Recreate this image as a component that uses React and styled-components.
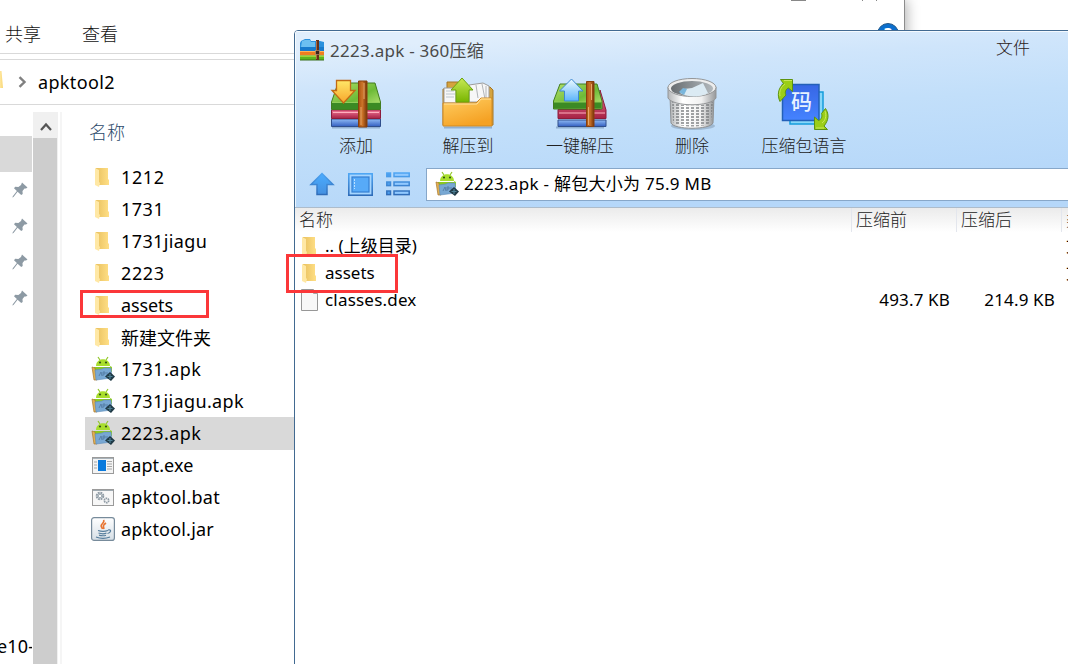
import React from "react";
import styled, { createGlobalStyle } from "styled-components";

const GlobalStyle = createGlobalStyle`
  * { box-sizing: border-box; }
  html, body { margin: 0; padding: 0; overflow: hidden; }
  body { font-family: "Noto Sans", "Noto Sans CJK SC", sans-serif; background: #fff; color: #000; }
  svg { display: block; flex: none; }
`;

const Desktop = styled.div`
  position: relative;
  width: 1068px;
  height: 664px;
  overflow: hidden;
  background: #fff;
`;

/* ---------- text ---------- */
const Text = styled.span`
  font-size: ${(p) => p.$size || 18}px;
  letter-spacing: ${(p) => p.$track || 0}px;
  color: ${(p) => p.$color || "#000"};
  line-height: 24px;
  white-space: nowrap;
  font-weight: ${(p) => p.$weight || 400};
`;
const CjkText = styled(Text)`
  font-family: "Noto Sans CJK SC", sans-serif;
  font-weight: ${(p) => p.$weight || 300};
`;

/* ---------- explorer window ---------- */
const ExplorerWindow = styled.section`
  position: absolute;
  left: 0;
  top: 0;
  width: 905px;
  height: 664px;
  display: flex;
  flex-direction: column;
  background: #fff;
  border-right: 1px solid #8c8c8c;
  box-shadow: 2px 0 12px rgba(0, 0, 0, 0.3);
`;
const RibbonTabs = styled.nav`
  display: flex;
  align-items: flex-start;
  gap: 41px;
  height: 54px;
  padding: 21px 0 0 5px;
  border-bottom: 1px solid #d9d9d9;
`;
const AddressBar = styled.div`
  display: flex;
  align-items: center;
  height: 46px;
  margin-top: 5px;
  padding-bottom: 1px;
  border-top: 1px solid #d9d9d9;
  border-bottom: 1px solid #d9d9d9;
`;
const AddressFolder = styled.span`
  width: 3px;
  height: 17px;
  background: linear-gradient(90deg, #ffe69c, #f8d775);
  margin: 0 15px 4px 0;
  clip-path: polygon(0 0, 50% 0, 100% 100%, 0 100%);
`;
const AddressText = styled(Text)`
  margin-left: 11px;
`;
const HelpBadge = styled.span`
  position: absolute;
  left: 877px;
  top: 23px;
  width: 22px;
  height: 22px;
  border-radius: 50%;
  border: 1px solid #265a88;
  background: #0b6fce;
  color: #fff;
  font-size: 16px;
  font-weight: 700;
  line-height: 20px;
  text-align: center;
`;
const CaptionMark = styled.span`
  position: absolute;
  left: ${(p) => p.$x}px;
  top: 0;
  width: ${(p) => p.$w}px;
  height: 1px;
  background: #888;
`;
const ExplorerBody = styled.div`
  display: flex;
  flex: 1;
  padding-top: 7px;
`;
const NavPane = styled.aside`
  display: flex;
  flex-direction: column;
  width: 32px;
  margin-right: 1px;
  overflow: hidden;
`;
const NavSelected = styled.div`
  width: 32px;
  height: 36px;
  margin-top: 24px;
  background: #d9d9d9;
`;
const PinRow = styled.div`
  display: flex;
  align-items: center;
  height: 36px;
  padding-left: 12px;
`;
const NavFooter = styled.div`
  display: flex;
  align-items: center;
  margin: auto 0 6px -3px;
`;
const ScrollBar = styled.div`
  width: 25px;
  display: flex;
  flex-direction: column;
  background: #f0f0f0;
`;
const ScrollUp = styled.div`
  display: flex;
  align-items: center;
  justify-content: center;
  height: 26px;
  padding-top: 3px;
`;
const ScrollThumb = styled.div`
  flex: 1;
  width: 24px;
  background: #cdcdcd;
`;
const Splitter = styled.div`
  width: 2px;
  margin-left: 2px;
  background: #f5f5f5;
`;
const FileList = styled.div`
  flex: 1;
  padding-left: 23px;
`;
const FileHeader = styled.div`
  height: 49px;
  padding: 7px 0 0 4px;
`;
const FileRow = styled.div`
  display: flex;
  align-items: center;
  height: 32px;
  padding-left: 6px;
  background: ${(p) => (p.$selected ? "#d9d9d9" : "transparent")};
  box-shadow: ${(p) => (p.$selected ? "0 1px 0 #d9d9d9" : "none")};
`;
const IconSlot = styled.span`
  display: flex;
  align-items: center;
  justify-content: center;
  width: ${(p) => p.$w || 24}px;
  margin-right: ${(p) => p.$gap || 6}px;
`;

/* ---------- archive window ---------- */
const ArchiveWindow = styled.section`
  position: absolute;
  left: 294px;
  top: 30px;
  width: 800px;
  height: 650px;
  display: flex;
  flex-direction: column;
  background: #fff;
  border: 1px solid #426a91;
  border-radius: 4px 0 0 0;
  overflow: hidden;
`;
const Chrome = styled.header`
  height: 177px;
  border-bottom: 1px solid #adbccb;
  background: linear-gradient(176deg, #e0eefc 20px, #cfe5fb 60px, #c2dffa 110px, #b5d7f9 195px);
  box-shadow: inset 1px 1px 0 rgba(255, 255, 255, 0.75);
`;
const TitleBar = styled.div`
  display: flex;
  align-items: flex-start;
  height: 46px;
  padding: 8px 0 0 5px;
`;
const Title = styled(Text)`
  width: 666px;
  margin-left: 5px;
`;
const MenuText = styled(CjkText)`
  margin-top: -4px;
`;
const ToolBar = styled.div`
  display: flex;
  padding-left: 5px;
  height: 85px;
`;
const ToolButton = styled.div`
  display: flex;
  flex-direction: column;
  align-items: center;
  gap: 2px;
  width: 112px;
`;
const ToolIcon = styled.span`
  display: flex;
  align-items: center;
  height: 54px;
`;
const PathRow = styled.div`
  display: flex;
  align-items: center;
  height: 45px;
  padding: 0 0 1px 14px;
`;
const NavIcons = styled.div`
  display: flex;
  align-items: center;
  gap: 13px;
  width: 117px;
`;
const PathBox = styled.div`
  display: flex;
  align-items: center;
  flex: 1;
  height: 33px;
  padding: 0 0 1px 9px;
  border: 1px solid #87a7c9;
  background: #fff;
`;
const Columns = styled.div`
  display: grid;
  grid-template-columns: 557px 105px 105px 30px;
  height: 27px;
  align-items: center;
`;
const ColumnHeader = styled(Columns)`
  height: 24px;
  background: linear-gradient(#ebebeb, #fff);
`;
const HeadCell = styled.div`
  display: flex;
  align-items: center;
  height: 24px;
  padding: 0 0 2px ${(p) => p.$pad || 4}px;
  border-right: 1px solid #e3e6ed;
`;
const NameCell = styled.div`
  display: flex;
  align-items: center;
  padding-left: 4px;
`;
const SizeCell = styled.div`
  text-align: right;
  padding-right: 7px;
`;
const TypeCell = styled.div`
  padding-left: 4px;
  white-space: nowrap;
`;

/* ---------- red marks ---------- */
const Mark = styled.div`
  position: absolute;
  left: ${(p) => p.$x}px;
  top: ${(p) => p.$y}px;
  width: ${(p) => p.$w}px;
  height: ${(p) => p.$h}px;
  border: 3px solid #fb3739;
`;

/* ---------- icons ---------- */
const Folder = () => (
  <svg width="16" height="22" viewBox="0 0 16 22">
    <defs>
      <linearGradient id="fold" x1="0" x2="1"><stop offset="0" stopColor="#e9c15f" /><stop offset="1" stopColor="#ffdf86" /></linearGradient>
    </defs>
    <path d="M2 2h12v11l1 1v5H3z" fill="url(#fold)" />
    <path d="M1 2l4 2v12l1 1-1 4-4-2z" fill="#ffe8a5" />
  </svg>
);

const Apk = () => (
  <svg width="24" height="26" viewBox="0 0 24 26">
    <path d="M7 1l2 3M17 1l-2 3" stroke="#91c629" strokeWidth="1.200" />
    <path d="M5 10c0-9 14-9 14 0z" fill="#a8de2d" />
    <path d="M3 11h17l1 5H3z" fill="#8bc91f" />
    <path d="M19 10l2 1v5h-2z" fill="#93cf28" />
    <circle cx="9" cy="6.500" r="1.100" fill="#33511a" /><circle cx="15" cy="6.500" r="1.100" fill="#33511a" />
    <path d="M1 11l3 1 2 12H3z" fill="#e2b04f" stroke="#a87731" strokeWidth=".7" />
    <path d="M4 14l7-1 2-1 7 0 1 10-16 2z" fill="#78a8d3" stroke="#5c8cb8" strokeWidth=".6" />
    <path d="M8 20l2-4 1 4M12 20v-4h2v2h-2M16 16v3" stroke="#4e769e" fill="none" strokeWidth=".8" />
    <path d="M19 16l5 4.500-4 4.500-6-4.500z" fill="#203a46" />
    <path d="M16.500 20.500h5M19 18v5" stroke="#4d7f94" strokeWidth="1.200" />
  </svg>
);

const Exe = () => (
  <svg width="22" height="17" viewBox="0 0 22 17">
    <rect x=".5" y=".5" width="21" height="16" fill="#f4f4f4" stroke="#9a9a9a" />
    <path d="M1 1.500h20" stroke="#a9b3ba" />
    <rect x="6" y="3" width="8" height="11" fill="#0979dc" />
    <path d="M2 5h3M2 8h3M2 11h3M15 4.500h5M15 7h5M15 9.500h5M15 12h5" stroke="#a6a6a6" />
  </svg>
);

const Bat = () => (
  <svg width="22" height="17" viewBox="0 0 22 17">
    <rect x=".5" y=".5" width="21" height="16" fill="#f7f7f7" stroke="#9a9a9a" />
    <path d="M1 1.500h20" stroke="#9faab1" />
    <circle cx="8" cy="7" r="3.300" fill="#e5e9ec" stroke="#8e9aa4" strokeWidth="2" strokeDasharray="1.800 .8" />
    <circle cx="8" cy="7" r="1.800" fill="#fff" stroke="#9ba7af" />
    <circle cx="14.500" cy="11.500" r="2.200" fill="#f5f5f5" stroke="#8e9aa4" strokeWidth="1.700" strokeDasharray="1.500 .6" />
  </svg>
);

const Jar = () => (
  <svg width="24" height="24" viewBox="0 0 24 24">
    <defs><linearGradient id="jarbg" x2="0" y2="1"><stop stopColor="#fff" /><stop offset="1" stopColor="#d6dfe6" /></linearGradient></defs>
    <rect x=".6" y=".6" width="22.800" height="22.800" rx="2.500" fill="url(#jarbg)" stroke="#778b9b" strokeWidth="1.200" />
    <path d="M12.500 3c2 3-4 4-2 7l1 2M15 6c-3 2-3 3-2 6" stroke="#e87532" strokeWidth="1.600" fill="none" />
    <path d="M7 13.500c3 1 7 1 10 0M7.500 16c3 1 6 1 8 0M8 18.200c3 .8 5 .8 7 0M5 20c4 1.500 10 1.500 14 0M17 13c4-1 3 3-.5 3.500" stroke="#547c9b" strokeWidth="1.200" fill="none" />
  </svg>
);

const Dex = () => (
  <svg width="17" height="22" viewBox="0 0 17 22">
    <path d="M.5.500h12l4 4v17H.500z" fill="#f8f8f8" stroke="#979797" />
    <path d="M12.500.500v4h4" fill="#e5e5e5" stroke="#a5a5a5" />
  </svg>
);

const Pin = () => (
  <svg width="16" height="16" viewBox="0 0 16 16">
    <path d="M10 .5l5.500 5-1.500 1h-1.500l-2 2.500.2 3-1.500 1L5.600 9.700 1.500 15 .3 15.500.8 14.200 4.900 9 2 6.300l1.200-1.500 3.200.2L9 3z" fill="#8d9aa4" />
  </svg>
);

const Logo = () => (
  <svg width="25" height="22" viewBox="0 0 25 22">
    <path d="M1 2l4-2h5l1 2h9l4 1v9H0V4z" fill="#2b91dd" />
    <path d="M2 2l3-1h5l1 2h4v5H1z" fill="#6cc0f1" />
    <path d="M0 8h24v4H0z" fill="#187bcc" />
    <path d="M0 12h24v4.500H0z" fill="#ee7d22" /><path d="M0 12.500h24" stroke="#ffb257" />
    <path d="M0 16.500h24V21H0z" fill="#5cb421" /><path d="M0 17.300h24" stroke="#a9df3d" />
    <path d="M0 21h24" stroke="#386f1c" />
    <path d="M16 1h3v20h-3z" fill="#663019" /><path d="M16.500 2v18" stroke="#b16b42" /><rect x="15.500" y="11.500" width="4" height="4" fill="#3a241c" stroke="#c2a07d" strokeWidth=".6" />
  </svg>
);

const Books = ({ up }) => (
  <svg width="54" height="52" viewBox="0 0 54 52">
    <defs>
      <linearGradient id="green" x2="1" y2="1"><stop stopColor="#b4e069" /><stop offset=".55" stopColor="#6dbb38" /><stop offset="1" stopColor="#c3ea7f" /></linearGradient>
      <linearGradient id="gold" x2="0" y2="1"><stop stopColor="#ffe768" /><stop offset="1" stopColor="#f8a62b" /></linearGradient>
      <linearGradient id="sky" x2="0" y2="1"><stop stopColor="#eefaff" /><stop offset="1" stopColor="#5cb4fb" /></linearGradient>
      <linearGradient id="strap"><stop stopColor="#a8520f" /><stop offset=".45" stopColor="#cd7429" /><stop offset="1" stopColor="#763408" /></linearGradient>
      <linearGradient id="blu" x2="0" y2="1"><stop stopColor="#8fbaf4" /><stop offset="1" stopColor="#345fc1" /></linearGradient>
      <linearGradient id="red" x2="0" y2="1"><stop stopColor="#f27596" /><stop offset="1" stopColor="#a62245" /></linearGradient>
    </defs>
    <path d="M3 49.500h48" stroke="#486b96" strokeWidth="2" opacity=".4" />
    <path d={up ? "M5 42h48v6.500H5z" : "M2.500 41h49v7.500h-49z"} fill="url(#blu)" stroke="#304f8c" />
    <path d={up ? "M47 12l6 20v8.500H5v-9h42z" : "M2.500 32h49v8.500h-49z"} fill="url(#red)" stroke="#8d1c3c" />
    <path d={up ? "M6 35h46" : "M4 34.500h46"} stroke="#ffb0be" />
    <path d={up ? "M7 6h37l5 17v8H.5v-8z" : "M9 5h37l5.500 19v7.500h-49V24z"} fill="url(#green)" stroke="#427d20" />
    <path d={up ? "M1 24h47.500v6.500H1z" : "M3 24.500h48V31H3z"} fill="#3b8a24" />
    <path d={up ? "M1 24h47" : "M3 24.500h48"} stroke="#90ce59" />
    <path d={up ? "M33.500 3.500h7.500v45h-7.500z" : "M29.500 3h8.500v46h-8.500z"} fill="url(#strap)" stroke="#88400e" />
    <path d={up ? "M38.500 6v16M35.500 29v18" : "M35 5v16M32 29v18"} stroke="#e8a769" />
    {up ? <path d="M18.500 1L30 13h-4.500v10h-14V13H6.500z" fill="url(#sky)" stroke="#3d89d1" />
      : <path d="M7.500 2.500h14v10h4.500L14.500 25 3 12.500h4.500z" fill="url(#gold)" stroke="#c26a15" strokeWidth="1.300" />}
  </svg>
);

const ExtractFolder = () => (
  <svg width="54" height="52" viewBox="0 0 54 52">
    <defs><linearGradient id="orange" x2=".5" y2="1"><stop stopColor="#ffcf63" /><stop offset="1" stopColor="#f5a123" /></linearGradient>
    <linearGradient id="lime" x2="0" y2="1"><stop stopColor="#c8e956" /><stop offset="1" stopColor="#78b500" /></linearGradient></defs>
    <path d="M3 49.500h48" stroke="#486b96" strokeWidth="2" opacity=".4" />
    <path d="M6 4h11l3 5h29l3 3v35H2V11h4z" fill="#d4a33e" stroke="#a57524" />
    <path d="M3 10h12v15H3zM28 7l14-2 6 3v16H28z" fill="#f7f7f7" stroke="#9c9c9c" />
    <path d="M35 7l2 13M41 6l3 15M45 8v12" stroke="#b2b5b9" /><path d="M5 13h8M5 16h9M5 19h8" stroke="#bcc6cd" />
    <path d="M2 25h33l5-5h11v28H2z" fill="url(#orange)" stroke="#ce8925" />
    <path d="M3 26h33l4-5h10" stroke="#ffe2a0" fill="none" />
    <path d="M21 0L32 12h-4v12H15V12h-5z" fill="url(#lime)" stroke="#6aa411" />
  </svg>
);

const Trash = () => (
  <svg width="54" height="54" viewBox="0 0 54 54">
    <defs>
      <linearGradient id="bin"><stop stopColor="#b4b6b8" /><stop offset=".3" stopColor="#fff" /><stop offset=".7" stopColor="#f1f1f1" /><stop offset="1" stopColor="#96989a" /></linearGradient>
      <linearGradient id="inside"><stop stopColor="#686d71" /><stop offset="1" stopColor="#b2b8bc" /></linearGradient>
      <pattern id="holes" width="5" height="3" patternUnits="userSpaceOnUse"><path d="M1 1h3" stroke="#77797c" strokeWidth="1.400" /></pattern>
    </defs>
    <ellipse cx="28" cy="49" rx="22" ry="4" fill="#60758a" opacity=".35" />
    <path d="M5 19h44l-1 27c-3 7-39 7-42 0z" fill="url(#bin)" stroke="#8e9092" />
    <path d="M7 25c12 5 29 5 41 0l-2 20c-5 6-33 6-38 0z" fill="url(#holes)" />
    <path d="M3 10v11c5 9 43 9 48 0V10z" fill="url(#bin)" stroke="#939597" />
    <ellipse cx="27" cy="10.500" rx="24" ry="9" fill="#ededed" stroke="#949698" />
    <ellipse cx="27" cy="11.500" rx="21" ry="7.500" fill="url(#inside)" />
    <path d="M15 16l4-4 8-1 11-5 5 10c-6 4-20 5-28 0z" fill="#dbeaf3" />
    <path d="M14 15l4-4 4 1-3 6z" fill="#7ab6dc" />
  </svg>
);

const GlyphBlue = styled.span`
  position: absolute;
  left: 14px;
  top: 11px;
  color: #e8f2ff;
  font: 500 21px/24px "Noto Sans CJK SC", sans-serif;
`;
const LanguageWrap = styled.span`
  position: relative;
  height: 54px;
`;
const Language = () => (
  <LanguageWrap>
    <svg width="54" height="54" viewBox="0 0 54 54">
      <defs><linearGradient id="lang" x2="0" y2="1"><stop stopColor="#3766e4" /><stop offset="1" stopColor="#4583ff" /></linearGradient></defs>
      <path d="M13 15h33v32H13z" fill="#86d7fa" stroke="#159cdb" strokeWidth="1.500" />
      <path d="M5.500 7.500h36.500v36H5.500z" fill="url(#lang)" stroke="#2360b8" strokeWidth="1.500" />
      <path d="M3.500 2.500h12v12l-4-3.500c-3 1-4 5-2.500 7L3 24.500c-3-6-2-13 3.500-18z" fill="#9bce17" stroke="#5d930f" />
      <path d="M50.500 52.500h-13v-12.500l4 3.500c3-1 4-4 3-7l4-5c4 6 3 12-1.500 17.500z" fill="#9bce17" stroke="#5d930f" />
      <path d="M7 3.500h8M3 19c-1-5 1-9 5-12M39 51h8M48 34c2 5 0 10-3 12" stroke="#c8e85b" fill="none" />
    </svg>
    <GlyphBlue>码</GlyphBlue>
  </LanguageWrap>
);

const BlueDefs = () => (
  <linearGradient id="navblue" gradientUnits="userSpaceOnUse" x1="0" y1="0" x2="0" y2="24">
    <stop stopColor="#50a8f6" /><stop offset="1" stopColor="#2d68b4" />
  </linearGradient>
);
const UpArrow = () => (
  <svg width="26" height="24" viewBox="0 0 26 24">
    <defs><BlueDefs /><linearGradient id="arrowfill" x2="0" y2="1"><stop stopColor="#4aacff" /><stop offset="1" stopColor="#4590e0" /></linearGradient></defs>
    <path d="M13 1.500L24 12.500h-6v10H8v-10H2z" fill="url(#arrowfill)" stroke="url(#navblue)" strokeWidth="1.500" />
  </svg>
);
const ViewIcon = () => (
  <svg width="25" height="23" viewBox="0 0 25 23">
    <rect x=".8" y=".8" width="23.400" height="21.400" fill="#a5d5ff" stroke="url(#navblue)" strokeWidth="1.600" />
    <rect x="4" y="4" width="17" height="15" fill="#57aaf8" stroke="#347fd2" strokeWidth="1.200" />
    <path d="M6.500 6v10" stroke="#bce0ff" strokeDasharray="2 1" />
  </svg>
);
const ListIcon = () => (
  <svg width="24" height="24" viewBox="0 0 24 24">
    {[1, 10, 19].map((y) => (
      <g key={y} fill="#91c9ff" stroke="url(#navblue)" strokeWidth="1.500">
        <rect x=".8" y={y} width="3.700" height="3.600" fill="#4c9eef" /><rect x="8" y={y} width="15.200" height="3.600" />
      </g>
    ))}
  </svg>
);

const files = [
  { name: "1212", Icon: Folder, track: 0.6 }, { name: "1731", Icon: Folder, track: 0.5 }, { name: "1731jiagu", Icon: Folder, track: 0.4 },
  { name: "2223", Icon: Folder, track: 0.6 }, { name: "assets", Icon: Folder, track: -0.1 }, { name: "新建文件夹", Icon: Folder, cjk: true },
  { name: "1731.apk", Icon: Apk, track: 0.45 }, { name: "1731jiagu.apk", Icon: Apk, track: 0.35 }, { name: "2223.apk", Icon: Apk, selected: true, track: 0.45 },
  { name: "aapt.exe", Icon: Exe, track: 0.1 }, { name: "apktool.bat", Icon: Bat, track: 0.25 }, { name: "apktool.jar", Icon: Jar, track: 0.2 },
];

const tools = [
  { label: "添加", icon: <Books /> },
  { label: "解压到", icon: <ExtractFolder /> },
  { label: "一键解压", icon: <Books up /> },
  { label: "删除", icon: <Trash /> },
  { label: "压缩包语言", icon: <Language /> },
];

const entries = [
  { name: ".. (上级目录)", Icon: Folder, type: "文件夹" },
  { name: "assets", Icon: Folder, type: "文件夹" },
  { name: "classes.dex", Icon: Dex, before: "493.7 KB", after: "214.9 KB", track: 0.2 },
];

export default function App() {
  return (
    <>
      <GlobalStyle />
      <Desktop>
        <ExplorerWindow>
          <RibbonTabs>
            <CjkText $color="#111">共享</CjkText>
            <CjkText $color="#111">查看</CjkText>
          </RibbonTabs>
          <CaptionMark $x={791} $w={15} />
          <CaptionMark $x={862} $w={1} />
          <CaptionMark $x={876} $w={1} />
          <HelpBadge>?</HelpBadge>
          <AddressBar>
            <AddressFolder />
            <svg width="9" height="12" viewBox="0 0 9 12"><path d="M1.500 1.200L6.500 6l-5 4.800" stroke="#808080" strokeWidth="2.400" fill="none" /></svg>
            <AddressText $track={0.35}>apktool2</AddressText>
          </AddressBar>
          <ExplorerBody>
            <NavPane>
              <NavSelected />
              {[0, 1, 2, 3].map((i) => <PinRow key={i}><Pin /></PinRow>)}
              <NavFooter><Text $track={0.2}>e10-</Text></NavFooter>
            </NavPane>
            <ScrollBar>
              <ScrollUp><svg width="12" height="10" viewBox="0 0 12 10"><path d="M1 8l5-5.500L11 8" stroke="#555" strokeWidth="2.200" fill="none" /></svg></ScrollUp>
              <ScrollThumb />
            </ScrollBar>
            <Splitter />
            <FileList>
              <FileHeader><CjkText $color="#2c4a6b">名称</CjkText></FileHeader>
              {files.map(({ name, Icon, selected, cjk, track }) => (
                <FileRow key={name} $selected={selected}>
                  {Icon === Folder ? <IconSlot $w={22} $gap={8}><Icon /></IconSlot> : <IconSlot><Icon /></IconSlot>}
                  {cjk ? <CjkText $weight={400}>{name}</CjkText> : <Text $track={track}>{name}</Text>}
                </FileRow>
              ))}
            </FileList>
          </ExplorerBody>
        </ExplorerWindow>

        <ArchiveWindow>
          <Chrome>
            <TitleBar>
              <Logo />
              <Title $size={17} $track={0.25} $color="#4a4a4a">2223.apk - 360压缩</Title>
              <MenuText $size={17} $color="#2c2222">文件</MenuText>
            </TitleBar>
            <ToolBar>
              {tools.map((t) => (
                <ToolButton key={t.label}>
                  <ToolIcon>{t.icon}</ToolIcon>
                  <CjkText $size={17} $color="#222">{t.label}</CjkText>
                </ToolButton>
              ))}
            </ToolBar>
            <PathRow>
              <NavIcons><UpArrow /><ViewIcon /><ListIcon /></NavIcons>
              <PathBox>
                <IconSlot $w={22}><Apk /></IconSlot>
                <Text $size={17} $track={0.28}>2223.apk - 解包大小为 75.9 MB</Text>
              </PathBox>
            </PathRow>
          </Chrome>
          <ColumnHeader>
            <HeadCell><CjkText $size={17} $color="#222">名称</CjkText></HeadCell>
            <HeadCell><CjkText $size={17} $color="#222">压缩前</CjkText></HeadCell>
            <HeadCell><CjkText $size={17} $color="#222">压缩后</CjkText></HeadCell>
            <HeadCell><CjkText $size={17} $color="#222">类型</CjkText></HeadCell>
          </ColumnHeader>
          {entries.map(({ name, Icon, type, before, after, track }) => (
            <Columns key={name}>
              <NameCell><IconSlot $w={20}><Icon /></IconSlot><Text $size={17} $track={track}>{name}</Text></NameCell>
              <SizeCell><Text $size={17} $track={0.15}>{before}</Text></SizeCell>
              <SizeCell><Text $size={17} $track={0.15}>{after}</Text></SizeCell>
              <TypeCell><Text $size={17}>{type}</Text></TypeCell>
            </Columns>
          ))}
        </ArchiveWindow>

        <Mark $x={80} $y={290} $w={129} $h={28} />
        <Mark $x={286} $y={254} $w={112} $h={39} />
      </Desktop>
    </>
  );
}
